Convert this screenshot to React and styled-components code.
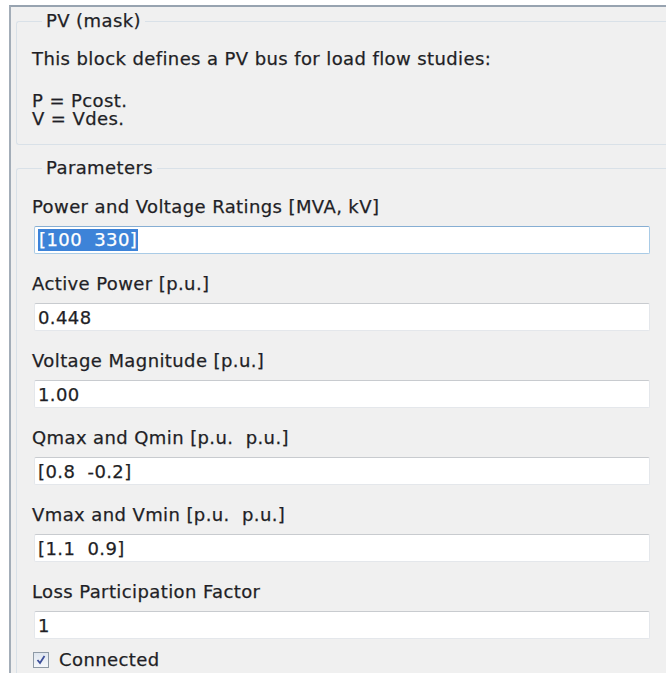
import React from 'react';
import styled, { createGlobalStyle } from 'styled-components';

const GlobalStyle = createGlobalStyle`
  html, body {
    margin: 0;
    padding: 0;
    background: #ffffff;
  }
  body {
    font-family: "DejaVu Sans", Verdana, sans-serif;
    font-size: 18px;
    letter-spacing: 0.4px;
    color: #1f1f26;
    -webkit-text-stroke: 0.25px #1f1f26;
  }
`;

const Window = styled.div`
  margin: 5px 0 0 9px;
  height: 668px;
  box-sizing: border-box;
  border-top: 2px solid #97a3b0;
  border-left: 2px solid #a3adb8;
  background: #f0f0f0;
  padding: 5px 0 0 5px;
  overflow: hidden;
`;

const Group = styled.fieldset`
  margin: 0 0 ${(p) => p.$gap || 0}px 0;
  padding: ${(p) => p.$pad || '0 0 0 15px'};
  border: 1px solid #d9e1e8;
  border-right: none;
  border-radius: 3px 0 0 3px;
  min-width: 0;
`;

const Legend = styled.legend`
  padding: 0 4px;
  margin-left: 10px;
  line-height: 18px;
`;

const Text = styled.p`
  margin: ${(p) => p.$top || 0}px 0 0 0;
  line-height: 18px;
`;

const Field = styled.div`
  display: flex;
  flex-direction: column;
  gap: 10px;
  margin-top: 21px;
`;

const Label = styled.label`
  line-height: 18px;
  white-space: pre;
`;

const Input = styled.div`
  width: 616px;
  height: 28px;
  box-sizing: border-box;
  margin-left: 2px;
  padding: 0 3px;
  display: flex;
  align-items: center;
  white-space: pre;
  background: #ffffff;
  border: 1px solid ${(p) => (p.$focus ? '#a9cbe6' : '#e4e7eb')};
  border-top-color: ${(p) => (p.$focus ? '#86aed3' : '#c8cbcf')};
  border-radius: 2px;
`;

const Selected = styled.span`
  background: #3d83d8;
  color: #ffffff;
  -webkit-text-stroke: 0.25px #ffffff;
  line-height: 22px;
  padding: 0 1px;
`;

const CheckRow = styled.div`
  display: flex;
  align-items: center;
  gap: 10px;
  margin: 12px 0 0 1px;
  line-height: 18px;
`;

const Box = styled.span`
  width: 14px;
  height: 14px;
  border: 1px solid #8e9aa6;
  background: linear-gradient(#dfe6ef, #f6f8fb);
  display: inline-flex;
  align-items: center;
  justify-content: center;
`;

const fields = [
  { label: 'Power and Voltage Ratings [MVA, kV]', value: '[100  330]', focus: true },
  { label: 'Active Power [p.u.]', value: '0.448' },
  { label: 'Voltage Magnitude [p.u.]', value: '1.00' },
  { label: 'Qmax and Qmin [p.u.  p.u.]', value: '[0.8  -0.2]' },
  { label: 'Vmax and Vmin [p.u.  p.u.]', value: '[1.1  0.9]' },
  { label: 'Loss Participation Factor', value: '1' },
];

export default function App() {
  return (
    <>
      <GlobalStyle />
      <Window>
        <Group $gap={14} $pad="0 0 16px 15px">
          <Legend>PV (mask)</Legend>
          <Text $top={20}>This block defines a PV bus for load flow studies:</Text>
          <Text $top={24}>P = Pcost.</Text>
          <Text>V = Vdes.</Text>
        </Group>
        <Group $pad="0 0 40px 15px">
          <Legend>Parameters</Legend>
          {fields.map((f) => (
            <Field key={f.label}>
              <Label>{f.label}</Label>
              <Input $focus={f.focus}>
                {f.focus ? <Selected>{f.value}</Selected> : f.value}
              </Input>
            </Field>
          ))}
          <CheckRow>
            <Box>
              <svg width="12" height="12" viewBox="0 0 12 12">
                <path d="M2.5 6 L5 9 L9.5 2" fill="none" stroke="#3d4f9a" strokeWidth="1.8" />
              </svg>
            </Box>
            <span>Connected</span>
          </CheckRow>
        </Group>
      </Window>
    </>
  );
}
